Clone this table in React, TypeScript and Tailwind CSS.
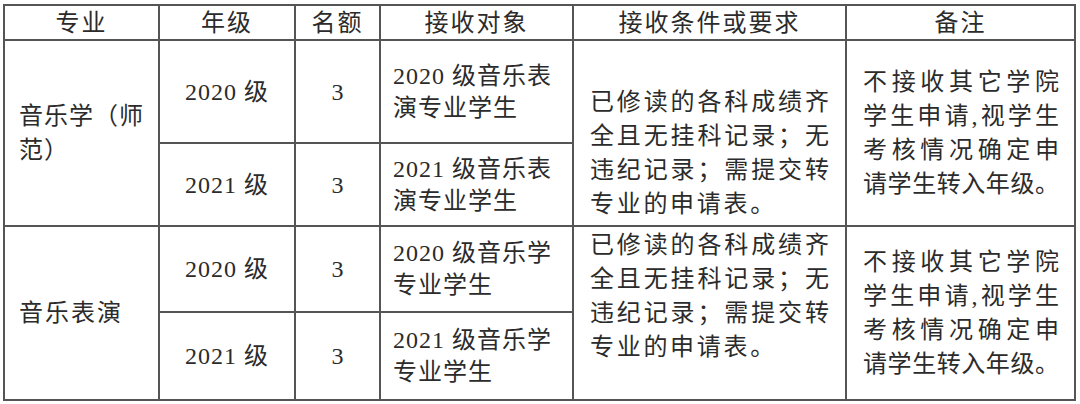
type Line = { text: string; full?: boolean };

function Lines({ lines, tracking }: { lines: Line[]; tracking: string }) {
  return (
    <>
      {lines.map((l, i) => (
        <div
          key={i}
          className={l.full ? "whitespace-nowrap [text-align-last:justify]" : `whitespace-nowrap ${tracking}`}
        >
          {l.text}
        </div>
      ))}
    </>
  );
}

const conditions: Line[] = [
  { text: "已修读的各科成绩齐", full: true },
  { text: "全且无挂科记录；无", full: true },
  { text: "违纪记录；需提交转", full: true },
  { text: "专业的申请表。" },
];

const remarks: Line[] = [
  { text: "不接收其它学院", full: true },
  { text: "学生申请,视学生", full: true },
  { text: "考核情况确定申", full: true },
  { text: "请学生转入年级。", full: true },
];

const cell = "border-2 border-[#555] p-0";

export default function App() {
  return (
    <div className="h-[404px] w-[1080px] overflow-hidden bg-white text-[24px] text-[#2b2b2b] [font-family:'Liberation_Serif','Noto_Sans_CJK_SC',serif]">
      <table className="ml-[3px] mt-[4px] table-fixed border-collapse">
        <colgroup>
          <col className="w-[155px]" />
          <col className="w-[136px]" />
          <col className="w-[85px]" />
          <col className="w-[193px]" />
          <col className="w-[273px]" />
          <col className="w-[229px]" />
        </colgroup>
        <tbody>
          {/* header */}
          <tr className="h-[35px] text-center leading-[30px] tracking-[2px]">
            <td className={cell}>专业</td>
            <td className={cell}>年级</td>
            <td className={cell}>名额</td>
            <td className={cell}>接收对象</td>
            <td className={cell}>接收条件或要求</td>
            <td className={cell}>备注</td>
          </tr>

          {/* 音乐学（师范） */}
          <tr className="h-[103px]">
            <td rowSpan={2} className={`${cell} pl-[14px] align-middle leading-[34px] tracking-[1px]`}>
              <div>音乐学（师</div>
              <div>范）</div>
            </td>
            <td className={`${cell} text-center tracking-[1px]`}>2020 级</td>
            <td className={`${cell} text-center`}>3</td>
            <td className={`${cell} pl-[12px] leading-[32px] tracking-[1px]`}>
              <div>2020 级音乐表</div>
              <div>演专业学生</div>
            </td>
            <td rowSpan={2} className={`${cell} px-[16px] pt-[44px] align-top leading-[34px]`}>
              <Lines lines={conditions} tracking="tracking-[2.7px]" />
            </td>
            <td rowSpan={2} className={`${cell} pl-[16px] pr-[15px] align-middle leading-[34px]`}>
              <Lines lines={remarks} tracking="tracking-[4px]" />
            </td>
          </tr>
          <tr className="h-[83px]">
            <td className={`${cell} text-center tracking-[1px]`}>2021 级</td>
            <td className={`${cell} text-center`}>3</td>
            <td className={`${cell} pl-[12px] leading-[32px] tracking-[1px]`}>
              <div>2021 级音乐表</div>
              <div>演专业学生</div>
            </td>
          </tr>

          {/* 音乐表演 */}
          <tr className="h-[86px]">
            <td rowSpan={2} className={`${cell} pl-[14px] align-middle leading-[34px] tracking-[2px]`}>
              音乐表演
            </td>
            <td className={`${cell} text-center tracking-[1px]`}>2020 级</td>
            <td className={`${cell} text-center`}>3</td>
            <td className={`${cell} pl-[12px] leading-[32px] tracking-[1px]`}>
              <div>2020 级音乐学</div>
              <div>专业学生</div>
            </td>
            <td rowSpan={2} className={`${cell} px-[16px] pt-[1px] align-top leading-[34px]`}>
              <Lines lines={conditions} tracking="tracking-[2.7px]" />
            </td>
            <td rowSpan={2} className={`${cell} pl-[16px] pr-[15px] align-middle leading-[34px]`}>
              <Lines lines={remarks} tracking="tracking-[4px]" />
            </td>
          </tr>
          <tr className="h-[88px]">
            <td className={`${cell} text-center tracking-[1px]`}>2021 级</td>
            <td className={`${cell} text-center`}>3</td>
            <td className={`${cell} pl-[12px] leading-[32px] tracking-[1px]`}>
              <div>2021 级音乐学</div>
              <div>专业学生</div>
            </td>
          </tr>
        </tbody>
      </table>
    </div>
  );
}
